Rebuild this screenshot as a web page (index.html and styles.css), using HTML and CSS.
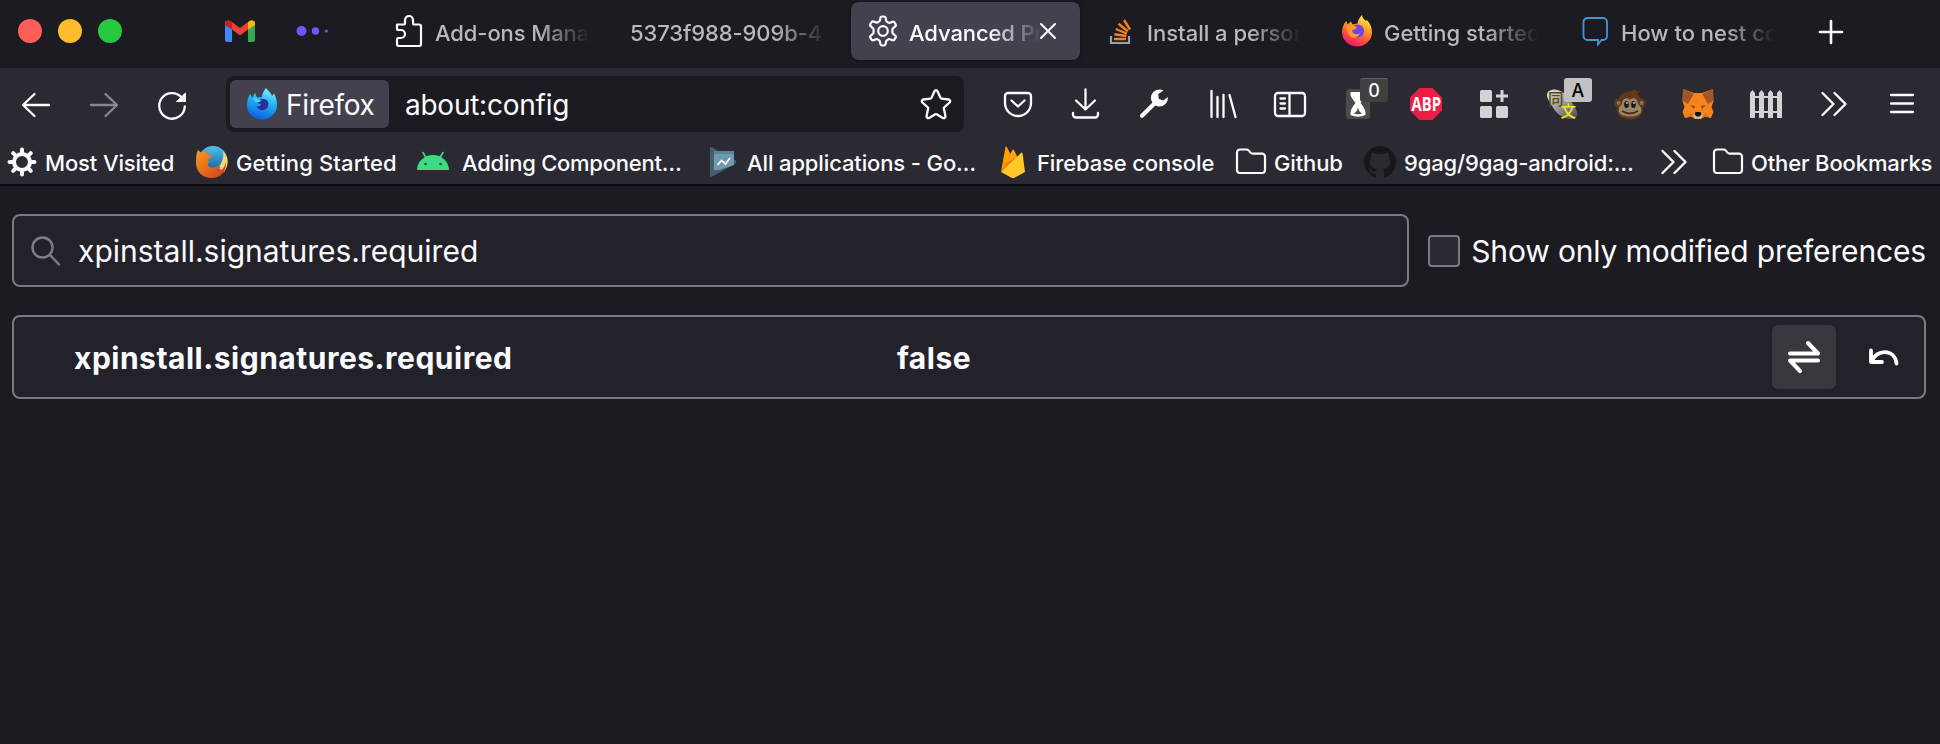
FILE: index.html
```html
<!DOCTYPE html>
<html lang="en">
<head>
<meta charset="utf-8">
<title>Advanced Preferences</title>
<link rel="stylesheet" href="styles.css">
</head>
<body>
<svg class="defs" width="0" height="0">
  <defs>
    <linearGradient id="blueFlame" x1="0.6" y1="0" x2="0.3" y2="1"><stop offset="0" stop-color="#7fefff"/><stop offset=".4" stop-color="#22b5f7"/><stop offset="1" stop-color="#0b5be0"/></linearGradient>
    <linearGradient id="hotFlame" x1="0.75" y1="0" x2="0.3" y2="1"><stop offset="0" stop-color="#fff44f"/><stop offset=".35" stop-color="#ffa42a"/><stop offset=".65" stop-color="#ff5a3a"/><stop offset="1" stop-color="#e8107a"/></linearGradient>
    <linearGradient id="globe" x1="0" y1="0" x2="0" y2="1"><stop offset="0" stop-color="#4fc3f2"/><stop offset="1" stop-color="#0a4f94"/></linearGradient>
    <linearGradient id="oldFox" x1="0" y1="0" x2="1" y2="1"><stop offset="0" stop-color="#f79a25"/><stop offset=".6" stop-color="#e5611c"/><stop offset="1" stop-color="#cf3a1c"/></linearGradient>
    <linearGradient id="pebble" x1="0" y1="0" x2="1" y2="1"><stop offset="0" stop-color="#e8e8e8"/><stop offset=".45" stop-color="#a0a0a0"/><stop offset="1" stop-color="#4c4c52"/></linearGradient>
    <symbol id="folder" viewBox="0 0 32 32"><path d="M2 6.500a3 3 0 0 1 3-3h6.500c1 0 1.700.4 2.300 1.100l1.700 2c.6.700 1.300 1 2.300 1H27a3 3 0 0 1 3 3V24a3 3 0 0 1-3 3H5a3 3 0 0 1-3-3z" fill="none" stroke="#fbfbfe" stroke-width="2.200"/></symbol>
    <symbol id="chevrons" viewBox="0 0 32 32"><path d="M4.500 5l11 11-11 11M16.500 5l11 11-11 11" fill="none" stroke="#fbfbfe" stroke-width="2.400" stroke-linecap="round" stroke-linejoin="round"/></symbol>
  </defs>
</svg>

<header class="tabstrip">
  <div class="lights"><i class="light close"></i><i class="light minimize"></i><i class="light zoom"></i></div>
  <div class="pinned">
    <svg class="icon" viewBox="0 0 32 32"><path d="M1 9v19a2 2 0 0 0 2 2h5V13z" fill="#4285f4" transform="translate(0 -3)"/><path d="M31 6v19a2 2 0 0 1-2 2h-5V10z" fill="#34a853"/><path d="M8 7l8 6 8-6v7.500l-8 6-8-6z" fill="#ea4335"/><path d="M24 14.500V7l2-1.300c2-1.400 5 0 5 2.800V10z" fill="#fbbc04"/><path d="M8 14.500V7L6 5.700C4 4.300 1 5.700 1 8.500V10z" fill="#c5221f"/></svg>
    <svg class="icon" viewBox="0 0 32 32"><g fill="#7552fb"><circle cx="5.500" cy="16" r="5"/><circle cx="19.500" cy="16" r="3.700"/><circle cx="30.300" cy="16" r="1.600"/></g></svg>
  </div>
  <nav class="tabs">
    <div class="tab">
      <svg class="icon" viewBox="0 0 32 32"><path d="M4 9.500h6.500q1.500 0 1.500-1.500V5a4 4 0 0 1 8 0v3q0 1.500 1.500 1.500H26a2 2 0 0 1 2 2V29a2 2 0 0 1-2 2H6a2 2 0 0 1-2-2v-4.500q0-1.500 1.500-1.500H8a4 4 0 0 0 0-8H5.500Q4 15 4 13.500z" fill="none" stroke="#fbfbfe" stroke-width="2.200" stroke-linejoin="round"/></svg>
      <span class="label">Add-ons Mana</span>
    </div>
    <div class="tab"><span class="label">5373f988-909b-4</span></div>
    <div class="tab active">
      <svg class="icon" viewBox="0 0 32 32"><g fill="none" stroke="#fbfbfe" stroke-width="2.200" stroke-linejoin="round"><path d="M13.300 3.200a2 2 0 0 1 2-1.700h1.400a2 2 0 0 1 2 1.700l.4 2.300q.2 1 1.200 1.500l1 .6q.8.500 1.700.1l2.200-.8a2 2 0 0 1 2.500.9l.8 1.300a2 2 0 0 1-.5 2.600l-1.800 1.500q-.8.600-.8 1.600v2.400q0 1 .8 1.600l1.800 1.500a2 2 0 0 1 .5 2.600l-.8 1.300a2 2 0 0 1-2.500.9l-2.200-.8q-.9-.4-1.700.1l-1 .6q-1 .5-1.200 1.500l-.4 2.300a2 2 0 0 1-2 1.700h-1.400a2 2 0 0 1-2-1.700l-.4-2.300q-.2-1-1.200-1.500l-1-.6q-.8-.5-1.700-.1l-2.200.8a2 2 0 0 1-2.500-.9l-.8-1.300a2 2 0 0 1 .5-2.600l1.800-1.500q.8-.6.800-1.600v-2.400q0-1-.8-1.600L4 11.400a2 2 0 0 1-.5-2.600l.8-1.300a2 2 0 0 1 2.500-.9l2.200.8q.9.400 1.700-.1l1-.6q1-.5 1.200-1.500z"/><circle cx="16" cy="16" r="4.800"/></g></svg>
      <span class="label">Advanced Pr</span>
      <svg class="tab-close" viewBox="0 0 20 20"><path d="M3 3l14 14M17 3L3 17" stroke="#fbfbfe" stroke-width="2" stroke-linecap="round"/></svg>
    </div>
    <div class="tab">
      <svg class="icon" viewBox="0 0 32 32"><path d="M7 21v7h18v-7" fill="none" stroke="#9ca3ab" stroke-width="2.200"/><g stroke="#f48024" stroke-width="2.400"><path d="M10 24h12M10.300 19.200l12 1.800M11.700 14l11.300 4.600M14.500 8.700l9.300 7.600M20 5l6 9.500"/></g></svg>
      <span class="label late">Install a person</span>
    </div>
    <div class="tab">
      <svg class="icon" viewBox="0 0 32 32"><path d="M1 17C1 12 3 8 5.500 6l1 3.500 3.500-3 1.500 3 5-1C17 5 18.500 2.500 21 0c.5 3 2 4.500 4 6 .5 0 .6-.6.600-1.200C29 8 31 12 31 17a15 14.500 0 0 1-30 0z" fill="url(#hotFlame)"/><circle cx="16.500" cy="16" r="6.600" fill="#7542e5"/><path d="M6 10c4-1 8 0 10 3-2 2-4 1-5 3 1 4 6 4 8 2-1 4-6 6-9 4s-5-7-4-12z" fill="#ff9a22"/></svg>
      <span class="label late">Getting started</span>
    </div>
    <div class="tab">
      <svg class="icon" viewBox="0 0 32 32"><path d="M9.500 3H25a4 4 0 0 1 4 4v14a4 4 0 0 1-4 4h-1.500L20 29.500V25H9.500a4 4 0 0 1-4-4V7a4 4 0 0 1 4-4z" fill="none" stroke="#3d9ad6" stroke-width="1.800"/></svg>
      <span class="label late">How to nest co</span>
    </div>
  </nav>
  <svg class="new-tab" viewBox="0 0 32 32"><path d="M16 5v22M5 16h22" stroke="#fbfbfe" stroke-width="2.600" stroke-linecap="round"/></svg>
</header>

<section class="toolbar">
  <div class="navbar">
    <div class="tools">
      <div class="tool"><svg class="icon" viewBox="0 0 32 32"><path d="M29 17H3M14.500 6L3 17l11.500 11" class="line"/></svg></div>
      <div class="tool disabled"><svg class="icon" viewBox="0 0 32 32"><path d="M3 17h26M17.500 6L29 17 17.500 28" class="line"/></svg></div>
      <div class="tool"><svg class="icon" viewBox="0 0 32 32"><path d="M28.800 18.500A12.800 12.800 0 1 1 25.500 9.300" class="line"/><path d="M29.500 5v8.500H20.500z" fill="#fbfbfe" stroke="#fbfbfe" stroke-linejoin="round"/></svg></div>
    </div>
    <div class="urlbar">
      <div class="identity">
        <svg class="icon" viewBox="0 0 32 32"><path d="M1 17C1 12 2.500 8 4.500 6l1.500 4 3-5 2 4.500 5-.5C16 5 18 3 20 0c2 3 5 4 6 8l2-2.500C30 9 31 13 31 17a15 14.500 0 0 1-30 0z" fill="url(#blueFlame)"/><path d="M10 13c3-3 9-3 11.500 0 2 3 .5 8-3.500 9s-7-2-7.500-4c2 1 4 0 4.500-2-2 0-4-1-5-3z" fill="#2a2f9c"/><path d="M7 9.500c3 0 6 2 8.500 2.500-1 2-3 2.500-5 2.500-2-1-3.500-3-3.500-5z" fill="#3ad0fb"/></svg>
        <span>Firefox</span>
      </div>
      <span class="url">about:config</span>
      <svg class="icon star" viewBox="0 0 32 32"><path d="M14.500 3.200c.6-1.300 2.400-1.300 3 0l3 6.600q.4.800 1.200.9l7 .8c1.500.2 2 2 .9 3l-5.200 4.600q-.7.600-.5 1.500l1.500 7.500c.3 1.500-1.200 2.500-2.500 1.800l-6.200-3.600q-.7-.4-1.400 0l-6.200 3.600c-1.300.7-2.800-.3-2.500-1.800l1.500-7.500q.2-.9-.5-1.500l-5.200-4.600c-1.100-1-.6-2.800.9-3l7-.8q.8-.1 1.200-.9z" class="line"/></svg>
    </div>
    <div class="tools">
      <div class="tool"><svg class="icon" viewBox="0 0 32 32"><path d="M6 5h20a3 3 0 0 1 3 3v7a13 13 0 0 1-26 0V8a3 3 0 0 1 3-3zM9.500 12.500l6.500 6 6.500-6" class="line"/></svg></div>
      <div class="tool"><svg class="icon" viewBox="0 0 32 32"><path d="M15.500 1.500v19M6 12.500l9.500 9 9.500-9M3 25v1.500a3 3 0 0 0 3 3h19a3 3 0 0 0 3-3V25" class="line"/></svg></div>
      <div class="tool"><svg class="icon" viewBox="0 0 32 32"><path d="M4 27.800L17 15" stroke="#fbfbfe" stroke-width="4.200" stroke-linecap="round"/><path d="M25.500 2.500a8.500 8.500 0 1 0 4.300 6.500l-4.500 3.500-4.600-1.800-.4-4.700z" fill="#fbfbfe"/></svg></div>
      <div class="tool"><svg class="icon" viewBox="0 0 32 32"><path d="M5.500 3v26M11.500 9v20M17.500 7v22M23.500 7L29.500 29" class="line"/></svg></div>
      <div class="tool"><svg class="icon" viewBox="0 0 32 32"><path d="M4 5h24a3 3 0 0 1 3 3v17a3 3 0 0 1-3 3H4a3 3 0 0 1-3-3V8a3 3 0 0 1 3-3zM15.500 5v23M6.500 10.500H11M6.500 15.500H11M6.500 20.500H11" class="line"/></svg></div>
      <div class="tool"><svg class="icon" viewBox="0 0 32 32"><rect x="4" y="1" width="24" height="30" rx="3" fill="#4b4b4b"/><path d="M8.500 4h15v3q-1 3-5 8 5 6 5 10v2q-7.500 3.500-15 0v-2q0-4 5-10-4-5-5-8z" fill="#fff"/><path d="M11.500 25.500q3.500-1 4.500-6 1 5 4.500 6-4.500 1.500-9 0z" fill="#4b4b4b"/></svg><span class="badge">0</span></div>
      <div class="tool"><svg class="icon" viewBox="0 0 32 32"><path d="M9.500 0h13L32 9.500v13L22.500 32h-13L0 22.500v-13z" fill="#ed1e45"/><text x="1.500" y="23" class="abp" textLength="29.500" lengthAdjust="spacingAndGlyphs">ABP</text></svg></div>
      <div class="tool"><svg class="icon" viewBox="0 0 32 32"><g fill="#d3d3d6"><rect x="2" y="2" width="12" height="12" rx="1.500"/><rect x="2" y="18" width="12" height="12" rx="1.500"/><rect x="18" y="18" width="12" height="12" rx="1.500"/><path d="M22.500 2h3v4.500H30v3h-4.500V14h-3V9.500H18v-3h4.500z"/></g></svg></div>
      <div class="tool"><svg class="icon" viewBox="0 0 32 32"><path d="M3 3C9-1 18 3 23 10s12 17 6 20-16-1-21-9S-2 7 3 3z" fill="url(#pebble)"/><text x="2" y="17" class="cjk" fill="#5a4a10">同</text><text x="14.500" y="28.500" class="cjk" fill="#f2e418">文</text></svg><span class="badge pale">A</span></div>
      <div class="tool"><svg class="icon" viewBox="0 0 32 32"><g fill="#60381c"><circle cx="4.500" cy="15" r="4.300"/><circle cx="27.500" cy="15" r="4.300"/><path d="M3 21C3 11 6 5 13 4c3-1 7-1 10-4l-1 3.500 4-.5-3 3.500c4 3 6 8 6 14 0 7-6 11-13 11S3 28 3 21z"/></g><circle cx="4.500" cy="15" r="2" fill="#8a7050"/><circle cx="27.500" cy="15" r="2" fill="#8a7050"/><path d="M8 16c0-6 6-7 8-4 2-3 8-2 8 4 3 3 4 5 3 8-2 6-20 6-22 0-1-3 0-5 3-8z" fill="#9b8560"/><g fill="#161c26"><ellipse cx="12.500" cy="16.500" rx="2.300" ry="3.500"/><ellipse cx="19.500" cy="16.500" rx="2.300" ry="3.500"/></g><g fill="#d8dde0"><circle cx="13" cy="15" r=".9"/><circle cx="20" cy="15" r=".9"/></g><path d="M8 23q8 5 16 0" fill="none" stroke="#4e2716" stroke-width="1.800"/></svg></div>
      <div class="tool"><svg class="icon" viewBox="0 0 32 32"><path d="M1 1l11 4h8l11-4 .5 12-2 6 2 5-2.500 6-6-1.500L19 31h-6l-4-2.500L3 30 .5 24l2-5-2-6z" fill="#f5841f"/><path d="M1 1l11 5-6 10-5-3zM31 1L20 6l6 10 5-3z" fill="#a3552a"/><path d="M12 6h8l6 11-5 3-1.500 6h-7L11 20l-5-3z" fill="#f6851b"/><path d="M8 17l5 1-1 3zM24 17l-5 1 1 3z" fill="#8d4a22"/><path d="M3 30l6-6 3 5-3-.5zM29 30l-6-6-3 5 3-.5z" fill="#e2761b"/><path d="M11 27l2 3.500h6l2-3.500-3-2h-4z" fill="#d5bfa8"/><path d="M13.500 24h5l1 2.500-2 2h-3l-2-2z" fill="#16161a"/></svg></div>
      <div class="tool"><svg class="icon" viewBox="0 0 32 32"><g fill="#d3d3d6"><path d="M0 30V5l2.500-3L5 5v25zM9 30V5l2.500-3L14 5v25zM18 30V5l2.500-3L23 5v25zM27 30V5l2.500-3L32 5v25z"/><path d="M0 8h32v2H0zM0 23h32v2H0z"/></g></svg></div>
      <div class="tool"><svg class="icon" viewBox="0 0 32 32"><use href="#chevrons"/></svg></div>
      <div class="tool"><svg class="icon" viewBox="0 0 32 32"><path d="M5 7h22M5 15.500h22M5 24h22" class="line"/></svg></div>
    </div>
  </div>

  <div class="bookmarks">
    <div class="bookmark"><svg class="icon" viewBox="0 0 32 32"><circle cx="16" cy="16" r="8" fill="none" stroke="#fbfbfe" stroke-width="4"/><path d="M16 3.500V8M16 24v4.500M3.500 16H8M24 16h4.500M7.200 7.200l3 3M21.800 21.800l3 3M7.200 24.800l3-3M21.800 10.200l3-3" stroke="#fbfbfe" stroke-width="4" stroke-linecap="round"/></svg><span>Most Visited</span></div>
    <div class="bookmark started"><svg class="icon" viewBox="0 0 32 32"><circle cx="17" cy="14.500" r="14.500" fill="url(#globe)"/><path d="M27 5c6 6 6 15 1 21l-6-4c4-5 6-10 5-17z" fill="#fbd774"/><path d="M2 4l3 2.500C8 5 11 6 12.500 8.500l4 .5c0 2-3 3-4.500 4.500l1 3c-2 2-1 5 3 5 3 0 5-2 8-1 1 2-2 3-3 4 5 1 8-4 9-9 1 9-5 16.500-14 16.500S0 26 0 17C0 12 0 8 2 4z" fill="url(#oldFox)"/></svg><span>Getting Started</span></div>
    <div class="bookmark wide"><svg class="icon" viewBox="0 0 32 32"><path d="M0 24a16 15 0 0 1 32 0z" fill="#3ddc84"/><path d="M6 6.500l3.500 6M26 6.500l-3.500 6" stroke="#3ddc84" stroke-width="1.600" stroke-linecap="round"/><circle cx="8.500" cy="18" r="1.300" fill="#22503a"/><circle cx="23.500" cy="18" r="1.300" fill="#22503a"/></svg><span>Adding Component…</span></div>
    <div class="bookmark"><svg class="icon" viewBox="0 0 32 32"><path d="M2 2q0-1.500 2-.5L27 14q2.500 2 0 4L4 30.500q-2 1-2-1z" fill="#45606c"/><path d="M6 5h20v14L11 24H6z" fill="#6f9aad"/><path d="M6 5h20v3H6z" fill="#5c8597"/><path d="M9.500 19l4-4.500 4 3.500 4.500-6" fill="none" stroke="#fff" stroke-width="1.700"/></svg><span>All applications - Go…</span></div>
    <div class="bookmark"><svg class="icon" viewBox="0 0 32 32"><path d="M4 26L8.500 1q.5-1 1.300 0l4.700 9z" fill="#ffa000"/><path d="M4 26L15.500 4q.7-1 1.300 0L21 12z" fill="#f57c00"/><path d="M9 17l6.500-13q.7-1 1.300 0l3.200 7z" fill="#ffa712"/><path d="M4 26L24 7q1.200-1 1.600.5L28 26l-10.500 5.700q-1.500.6-3 0z" fill="#ffca28"/></svg><span class="nudge">Firebase console</span></div>
    <div class="bookmark"><svg class="icon" viewBox="0 0 32 32"><use href="#folder"/></svg><span>Github</span></div>
    <div class="bookmark"><svg class="icon" viewBox="0 0 16 16"><path fill="#17171a" d="M8 0a8 8 0 0 0-2.530 15.590c.4.070.55-.17.550-.38v-1.490c-2.230.490-2.700-.94-2.700-.94-.36-.92-.89-1.170-.89-1.170-.73-.5.060-.49.060-.49.8.060 1.230.83 1.230.83.710 1.220 1.870.87 2.330.66.070-.52.280-.87.500-1.070-1.780-.2-3.640-.89-3.640-3.950 0-.87.310-1.590.820-2.150-.08-.2-.36-1.020.08-2.120 0 0 .67-.21 2.200.82a7.600 7.600 0 0 1 4 0c1.530-1.040 2.200-.82 2.200-.82.440 1.100.160 1.920.080 2.120.510.56.820 1.270.820 2.150 0 3.070-1.870 3.750-3.650 3.950.29.250.540.730.540 1.480v2.190c0 .21.150.460.550.380A8 8 0 0 0 8 0z"/></svg><span class="nudge">9gag/9gag-android:…</span></div>
    <div class="bookmark"><svg class="icon" viewBox="0 0 32 32"><use href="#chevrons"/></svg></div>
    <div class="bookmark"><svg class="icon" viewBox="0 0 32 32"><use href="#folder"/></svg><span>Other Bookmarks</span></div>
  </div>
</section>

<main class="config">
  <div class="search-row">
    <div class="search-box">
      <svg class="icon" viewBox="0 0 32 32"><g fill="none" stroke="#7e7d86" stroke-width="2.400" stroke-linecap="round"><circle cx="12.500" cy="12.500" r="10"/><path d="M20 20l9 9.500"/></g></svg>
      <span>xpinstall.signatures.required</span>
    </div>
    <label class="only-modified"><i class="checkbox"></i><span>Show only modified preferences</span></label>
  </div>
  <div class="pref-row">
    <span class="pref-name">xpinstall.signatures.required</span>
    <span class="pref-value">false</span>
    <div class="button toggle"><svg class="icon" viewBox="0 0 32 32"><path d="M2 12.500h28M30 12.500L20 2M30 19.500H2M2 19.500L12 30" fill="none" stroke="#fff" stroke-width="4" stroke-linecap="round" stroke-linejoin="round"/></svg></div>
    <div class="button"><svg class="icon" viewBox="0 0 32 32"><path d="M3 9.500V21h11M3.500 21C8 7.500 27 7.500 28.500 22.500" fill="none" stroke="#fff" stroke-width="3.800" stroke-linecap="round" stroke-linejoin="round"/></svg></div>
  </div>
</main>
</body>
</html>
```
FILE: styles.css
```css
* { box-sizing: border-box; }
body {
  margin: 0;
  height: 744px;
  overflow: hidden;
  background: #1c1b22;
  color: #fbfbfe;
  font-family: Inter, "Noto Sans", sans-serif;
  white-space: nowrap;
}
.defs { position: absolute; }
svg { display: block; flex: none; overflow: visible; }
.icon { width: 32px; height: 32px; }
.line {
  fill: none;
  stroke: #fbfbfe;
  stroke-width: 2.3;
  stroke-linecap: round;
  stroke-linejoin: round;
}

/* Tab strip */
.tabstrip { display: flex; height: 68px; padding-bottom: 6px; align-items: center; font-size: 22px; font-weight: 500; }
.lights { display: flex; gap: 16px; width: 224px; padding-left: 18px; }
.light { width: 24px; height: 24px; border-radius: 50%; }
.light.close { background: #ff5f57; }
.light.minimize { background: #febc2e; }
.light.zoom { background: #28c840; }
.pinned { display: flex; gap: 40px; width: 149px; }
.tabs { display: flex; gap: 8px; padding-left: 4px; }
.tab { display: flex; align-items: center; gap: 10px; width: 229px; height: 58px; padding: 0 16px; border-radius: 8px; }
.tab .label {
  flex: 1;
  overflow: hidden;
  padding-top: 4px;
  color: #b9b8bf;
  letter-spacing: -0.1px;
  line-height: 30px;
  -webkit-mask-image: linear-gradient(to left, transparent, #000 52px);
  mask-image: linear-gradient(to left, transparent, #000 52px);
}
.tab .label.late { padding-left: 1px; letter-spacing: 0; }
.tab.active { background: #42414d; box-shadow: 0 0 5px #0006; }
.tab.active .label { flex: none; width: 132px; color: #fbfbfe; }
.tab-close { width: 20px; height: 20px; margin-left: -13px; }
.new-tab { width: 32px; height: 32px; margin: 2px 0 0 24px; }

/* Navigation toolbar */
.toolbar { height: 118px; background: #2b2a33; border-bottom: 2px solid #0c0c0e; }
.navbar { display: flex; align-items: center; height: 72px; padding-left: 2px; }
.tools { display: flex; }
.tool { position: relative; display: flex; justify-content: center; width: 68px; }
.tool.disabled { opacity: 0.45; }
.badge {
  position: absolute;
  left: 36px;
  top: -10px;
  width: 28px;
  height: 24px;
  border-radius: 3px;
  border-top: 1px solid #626262;
  background: #404040;
  font-size: 18px;
  font-weight: 500;
  line-height: 24px;
  text-align: center;
}
.badge.pale { background: #c1c1c1; border-color: #c1c1c1; color: #000; }
.abp { font: bold 19px "Open Sans", sans-serif; fill: #fff; }
.cjk { font: 500 15.5px "Noto Sans CJK JP", sans-serif; }
.urlbar { display: flex; align-items: center; width: 738px; height: 56px; margin: 0 20px; padding: 0 12px 0 4px; border-radius: 8px; background: #1c1b22; font-size: 28px; }
.identity { display: flex; align-items: center; gap: 8px; width: 159px; height: 48px; padding-left: 16px; border-radius: 6px; background: #42414d; letter-spacing: -0.3px; }
.identity span, .url { padding-top: 2px; }
.url { flex: 1; padding-left: 16px; letter-spacing: -0.25px; }
.star { margin-bottom: 1px; }

/* Bookmarks bar */
.bookmarks {
  display: grid;
  grid-template-columns: 190px 221px 291px 289px 238px 129px 294px 54px auto;
  align-items: center;
  height: 44px;
  padding-left: 6px;
  font-size: 22px;
  font-weight: 500;
  letter-spacing: -0.13px;
}
.bookmark { display: flex; align-items: center; gap: 7px; }
.bookmark.started { gap: 8px; letter-spacing: 0.12px; }
.bookmark.wide { gap: 13px; letter-spacing: -0.25px; }
.bookmark span { padding-top: 1px; }
.bookmark .nudge { padding-left: 1px; }

/* Preferences page */
.config { padding: 28px 14px 0 12px; font-size: 30px; }
.search-row { display: flex; align-items: center; justify-content: space-between; height: 73px; }
.search-box { display: flex; align-items: center; gap: 16px; width: 1397px; height: 73px; padding-left: 16px; border: 2px solid #7b7a82; border-radius: 8px; background: #23222b; letter-spacing: 0; }
.only-modified { display: flex; align-items: center; gap: 11px; letter-spacing: -0.15px; }
.checkbox { width: 32px; height: 32px; border: 2px solid #7b7a82; border-radius: 4px; background: #2b2a33; }
.pref-row { display: flex; align-items: center; height: 84px; margin-top: 28px; padding: 0 8px 0 60px; border: 2px solid #7b7a82; border-radius: 8px; background: #23222b; font-weight: 700; letter-spacing: 0.5px; }
.pref-name { width: 823px; padding-top: 1px; }
.pref-value { flex: 1; padding-top: 1px; }
.button { display: flex; align-items: center; justify-content: center; width: 64px; height: 64px; margin-left: 16px; border-radius: 6px; }
.button.toggle { background: #39383f; }
```
